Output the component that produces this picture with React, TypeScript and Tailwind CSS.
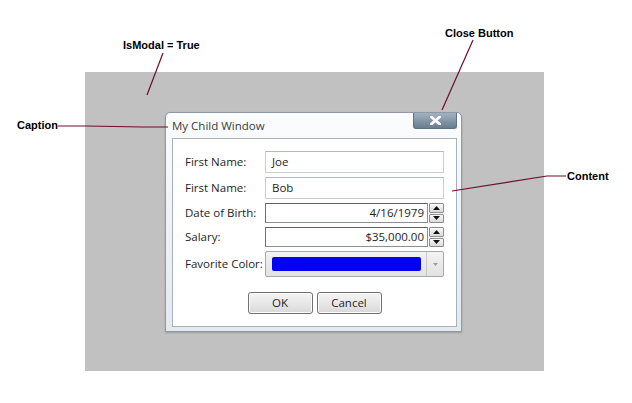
import React from 'react';

const UI_FONT = { fontFamily: '"Open Sans", "Noto Sans", sans-serif' };

const Label: React.FC<{ text: string }> = ({ text }) => (
  <div className="w-[80px] shrink-0 text-[11.5px] text-[#1e1e1e] leading-none">{text}</div>
);

const TextBox: React.FC<{ value: string }> = ({ value }) => (
  <div className="flex-1 h-[22px] flex items-center px-[6px] bg-white border border-[#c9ced4] border-t-[#b4bac2] text-[11.5px] text-[#1e1e1e]">
    {value}
  </div>
);

const Spinner: React.FC = () => (
  <div className="w-[15px] h-[20px] flex flex-col gap-[1px] ml-[1px]">
    <div className="flex-1 flex items-center justify-center bg-gradient-to-b from-[#fafafa] to-[#dadada] border border-[#8e8e8e] rounded-[1px]">
      <svg width="7" height="4" viewBox="0 0 7 4"><path d="M0 4 L3.5 0 L7 4 Z" fill="#111" /></svg>
    </div>
    <div className="flex-1 flex items-center justify-center bg-gradient-to-b from-[#fafafa] to-[#dadada] border border-[#8e8e8e] rounded-[1px]">
      <svg width="7" height="4" viewBox="0 0 7 4"><path d="M0 0 L7 0 L3.5 4 Z" fill="#111" /></svg>
    </div>
  </div>
);

const NumericBox: React.FC<{ value: string }> = ({ value }) => (
  <div className="flex-1 flex h-[20px]">
    <div className="flex-1 flex items-center justify-end pr-[3px] bg-white border border-[#8a8f95] border-t-[#5e6166] border-l-[#6c7075] text-[11.5px] text-[#1e1e1e]">
      {value}
    </div>
    <Spinner />
  </div>
);

const Row: React.FC<{ label: string; children: React.ReactNode }> = ({ label, children }) => (
  <div className="flex items-center">
    <Label text={label} />
    {children}
  </div>
);

const Button: React.FC<{ text: string }> = ({ text }) => (
  <button className="w-[65px] h-[22px] rounded-[3px] border border-[#707070] bg-gradient-to-b from-[#f4f4f4] via-[#e8e8e8] to-[#d8d8d8] text-[11.5px] text-[#1e1e1e] leading-none shadow-[inset_0_0_0_1px_#fcfcfc]">
    {text}
  </button>
);

const ChildWindow: React.FC = () => (
  <div
    className="w-[297px] h-[220px] flex flex-col rounded-t-[5px] border border-[#8d99a6] bg-gradient-to-b from-[#fbfcfd] to-[#e3e9ef] shadow-[0_1px_2px_rgba(0,0,0,0.2)]"
    style={UI_FONT}
  >
    {/* Title bar */}
    <div className="h-[25px] flex items-start justify-between pl-[6px] pr-[4px]">
      <div className="pt-[7px] text-[11.5px] text-[#3a3a3a] leading-none">My Child Window</div>
      <div className="w-[44px] h-[16px] flex items-center justify-center rounded-b-[3px] border border-t-0 border-[#5d7185] bg-gradient-to-b from-[#a3b2c0] via-[#8597a9] to-[#687d91]">
        <svg width="11" height="9" viewBox="0 0 11 9">
          <path d="M1.2 0.8 L9.8 8.2 M9.8 0.8 L1.2 8.2" stroke="#ffffff" strokeWidth="2.8" strokeLinecap="square" />
        </svg>
      </div>
    </div>

    {/* Content */}
    <div className="flex-1 ml-[6px] mr-[4px] mb-[4px] border border-[#a7b1bc] bg-white shadow-[inset_0_0_0_1px_#ffffff] flex flex-col px-[12px] pt-[12px]">
      <div className="flex flex-col gap-[4px]">
        <Row label="First Name:">
          <TextBox value="Joe" />
        </Row>
        <Row label="First Name:">
          <TextBox value="Bob" />
        </Row>
        <Row label="Date of Birth:">
          <NumericBox value="4/16/1979" />
        </Row>
        <Row label="Salary:">
          <NumericBox value="$35,000.00" />
        </Row>
        <Row label="Favorite Color:">
          <div className="flex-1 h-[26px] flex items-center border border-[#a3a8ae] rounded-[2px] bg-gradient-to-b from-[#f3f3f3] to-[#e2e2e2]">
            <div className="flex-1 h-full flex items-center pl-[6px] pr-[5px]">
              <div className="w-full h-[14px] bg-[#0000f2] rounded-[2px]" />
            </div>
            <div className="w-px h-[24px] bg-[#c8c8c8]" />
            <div className="w-[16px] flex items-center justify-center">
              <svg width="5" height="3" viewBox="0 0 5 3"><path d="M0 0 L5 0 L2.5 3 Z" fill="#9a9a9a" /></svg>
            </div>
          </div>
        </Row>
      </div>
      <div className="flex justify-center gap-[4px] mt-[15px]">
        <Button text="OK" />
        <Button text="Cancel" />
      </div>
    </div>
  </div>
);

const Callout: React.FC<{ text: string; className: string }> = ({ text, className }) => (
  <div
    className={`absolute text-[11px] font-bold text-black leading-none whitespace-nowrap ${className}`}
    style={{ fontFamily: '"Liberation Sans", Arial, sans-serif' }}
  >
    {text}
  </div>
);

export default function App() {
  return (
    <div className="relative w-[632px] h-[403px] bg-white overflow-hidden">
      <div className="pt-[72px] pl-[85px]">
        <div className="w-[459px] h-[299px] bg-[#c1c1c1] pt-[40px] pl-[80px]">
          <ChildWindow />
        </div>
      </div>

      {/* Annotations */}
      <Callout text="IsModal = True" className="left-[123px] top-[40px]" />
      <Callout text="Caption" className="left-[17px] top-[120px]" />
      <Callout text="Close Button" className="left-[445px] top-[28px]" />
      <Callout text="Content" className="left-[567px] top-[171px]" />
      <svg className="absolute inset-0 pointer-events-none" width="632" height="403">
        <g stroke="#6e0d2c" strokeWidth="1.2" fill="none">
          <path d="M163 53 L147 95" />
          <path d="M58 126 L87 126 L142 127 L168 127" />
          <path d="M473 40 L442 110" />
          <path d="M566 176 L547 176 L452 191" />
        </g>
      </svg>
    </div>
  );
}
